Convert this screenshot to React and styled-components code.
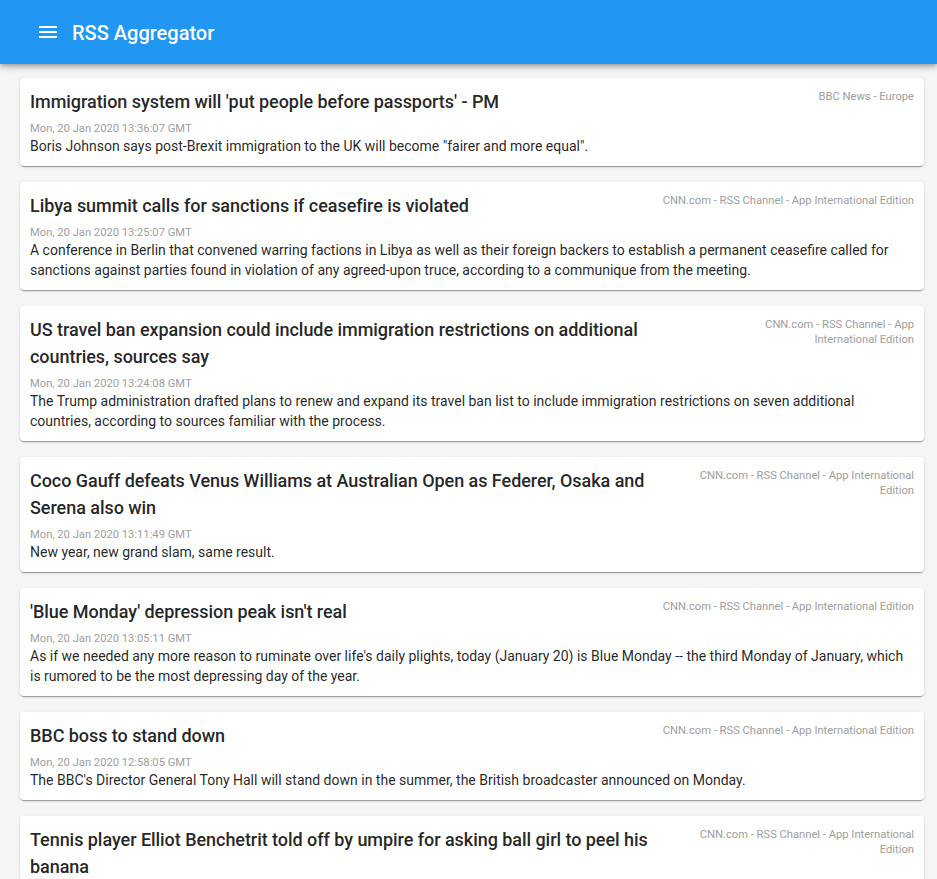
import React from 'react';
import styled, { createGlobalStyle } from 'styled-components';

const GlobalStyle = createGlobalStyle`
  html { scrollbar-width: none; }
  html::-webkit-scrollbar { display: none; }
  body {
    margin: 0;
    background: #f5f5f5;
    font-family: Roboto, "Liberation Sans", sans-serif;
  }
`;

const items = [
  {
    title: "Immigration system will 'put people before passports' - PM",
    source: 'BBC News - Europe',
    date: 'Mon, 20 Jan 2020 13:36:07 GMT',
    text: 'Boris Johnson says post-Brexit immigration to the UK will become "fairer and more equal".',
  },
  {
    title: 'Libya summit calls for sanctions if ceasefire is violated',
    source: 'CNN.com - RSS Channel - App International Edition',
    date: 'Mon, 20 Jan 2020 13:25:07 GMT',
    text: 'A conference in Berlin that convened warring factions in Libya as well as their foreign backers to establish a permanent ceasefire called for sanctions against parties found in violation of any agreed-upon truce, according to a communique from the meeting.',
  },
  {
    title: 'US travel ban expansion could include immigration restrictions on additional countries, sources say',
    source: 'CNN.com - RSS Channel - App International Edition',
    date: 'Mon, 20 Jan 2020 13:24:08 GMT',
    text: 'The Trump administration drafted plans to renew and expand its travel ban list to include immigration restrictions on seven additional countries, according to sources familiar with the process.',
  },
  {
    title: 'Coco Gauff defeats Venus Williams at Australian Open as Federer, Osaka and Serena also win',
    source: 'CNN.com - RSS Channel - App International Edition',
    date: 'Mon, 20 Jan 2020 13:11:49 GMT',
    text: 'New year, new grand slam, same result.',
  },
  {
    title: "'Blue Monday' depression peak isn't real",
    source: 'CNN.com - RSS Channel - App International Edition',
    date: 'Mon, 20 Jan 2020 13:05:11 GMT',
    text: "As if we needed any more reason to ruminate over life's daily plights, today (January 20) is Blue Monday -- the third Monday of January, which is rumored to be the most depressing day of the year.",
  },
  {
    title: 'BBC boss to stand down',
    source: 'CNN.com - RSS Channel - App International Edition',
    date: 'Mon, 20 Jan 2020 12:58:05 GMT',
    text: "The BBC's Director General Tony Hall will stand down in the summer, the British broadcaster announced on Monday.",
  },
  {
    title: 'Tennis player Elliot Benchetrit told off by umpire for asking ball girl to peel his banana',
    source: 'CNN.com - RSS Channel - App International Edition',
    date: 'Mon, 20 Jan 2020 12:50:41 GMT',
    text: 'French tennis player Elliot Benchetrit was told off by the umpire after asking a ball girl to peel his banana during a qualifying match at the Australian Open.',
  },
];

export default function App() {
  return (
    <>
      <GlobalStyle />
      <AppBar>
        <MenuButton aria-label="menu">
          <svg width="24" height="24" viewBox="0 0 24 24" fill="#fff">
            <path d="M3 18h18v-2H3v2zm0-5h18v-2H3v2zm0-7v2h18V6H3z" />
          </svg>
        </MenuButton>
        <AppTitle>RSS Aggregator</AppTitle>
      </AppBar>
      <Feed>
        {items.map((item) => (
          <Card key={item.date}>
            <CardHead>
              <Title>{item.title}</Title>
              <Source>{item.source}</Source>
            </CardHead>
            <Date>{item.date}</Date>
            <Text>{item.text}</Text>
          </Card>
        ))}
      </Feed>
    </>
  );
}

const AppBar = styled.header`
  display: flex;
  align-items: center;
  height: 64px;
  padding: 0 24px;
  background: #2196f3;
  color: #fff;
  box-shadow: 0 2px 4px -1px rgba(0, 0, 0, 0.2), 0 4px 5px 0 rgba(0, 0, 0, 0.14),
    0 1px 10px 0 rgba(0, 0, 0, 0.12);
  position: relative;
  z-index: 2;
`;

const MenuButton = styled.button`
  display: flex;
  padding: 0;
  margin: 0 12px;
  border: none;
  background: none;
  cursor: pointer;
`;

const AppTitle = styled.h1`
  margin: 0;
  padding-top: 2px;
  font-size: 20px;
  font-weight: 500;
`;

const Feed = styled.main`
  display: flex;
  flex-direction: column;
  gap: 16px;
  padding: 14px 13px 16px 20px;
`;

const Card = styled.article`
  padding: 10px;
  background: #fff;
  border-radius: 4px;
  box-shadow: 0 2px 1px -1px rgba(0, 0, 0, 0.2), 0 1px 1px 0 rgba(0, 0, 0, 0.14),
    0 1px 3px 0 rgba(0, 0, 0, 0.12);
`;

const CardHead = styled.div`
  display: flex;
  justify-content: space-between;
  align-items: flex-start;
`;

const Title = styled.h2`
  margin: 0;
  font-size: 18px;
  line-height: 27px;
  font-weight: 500;
  letter-spacing: -0.05px;
  color: rgba(0, 0, 0, 0.87);
`;

const Source = styled.span`
  padding-top: 1px;
  font-size: 11.2px;
  line-height: 15px;
  color: #9e9e9e;
  text-align: right;
`;

const Date = styled.div`
  margin-top: 6px;
  font-size: 11.2px;
  line-height: 15px;
  color: #9e9e9e;
`;

const Text = styled.p`
  margin: 0;
  font-size: 14px;
  line-height: 20px;
  color: rgba(0, 0, 0, 0.87);
`;
